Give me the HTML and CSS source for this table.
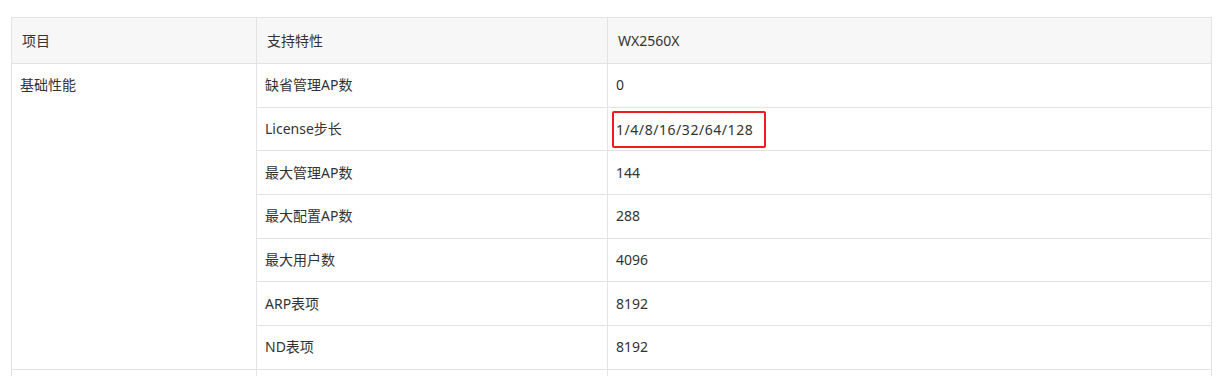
FILE: index.html
```html
<!DOCTYPE html>
<html lang="zh-CN">
<head>
<meta charset="utf-8">
<title>规格表</title>
<link rel="stylesheet" href="styles.css">
</head>
<body>
<table class="spec">
  <colgroup>
    <col class="c1"><col class="c2"><col class="c3">
  </colgroup>
  <thead>
    <tr class="head"><th>项目</th><th>支持特性</th><th>WX2560X</th></tr>
  </thead>
  <tbody>
    <tr><td class="group" rowspan="7">基础性能</td><td>缺省管理AP数</td><td>0</td></tr>
    <tr><td>License步长</td><td><span class="mark">1/4/8/16/32/64/128</span></td></tr>
    <tr><td>最大管理AP数</td><td>144</td></tr>
    <tr><td>最大配置AP数</td><td>288</td></tr>
    <tr><td>最大用户数</td><td>4096</td></tr>
    <tr><td>ARP表项</td><td>8192</td></tr>
    <tr><td>ND表项</td><td>8192</td></tr>
    <tr><td>&nbsp;</td><td>&nbsp;</td><td>&nbsp;</td></tr>
  </tbody>
</table>
</body>
</html>
```
FILE: styles.css
```css
html, body {
  margin: 0;
  background: #fff;
}
body {
  padding: 17px 22px 0 11px;
  height: 376px;
  box-sizing: border-box;
  overflow: hidden;
  font-family: "Noto Sans", "Noto Sans CJK SC", sans-serif;
  font-size: 14px;
  color: #333;
}
.spec {
  width: 1200px;
  border-collapse: collapse;
  table-layout: fixed;
}
.c1 { width: 245px; }
.c2 { width: 351px; }
.c3 { width: 604px; }
.spec th, .spec td {
  border: 1px solid #e3e3e3;
  text-align: left;
  line-height: 20px;
  vertical-align: middle;
}
.spec th {
  background: #f7f7f7;
  font-weight: normal;
  padding: 0 10px;
  height: 45px;
}
.spec td {
  padding: 0 8px;
  height: 42.7px;
}
.spec td.group {
  vertical-align: top;
  padding-top: 11px;
}
.mark {
  display: inline-block;
  border: 2px solid #f21b1b;
  border-radius: 2px;
  padding: 7px 11px 6px 2px;
  margin-left: -4px;
  margin-top: 1px;
  letter-spacing: 0.55px;
}
```
